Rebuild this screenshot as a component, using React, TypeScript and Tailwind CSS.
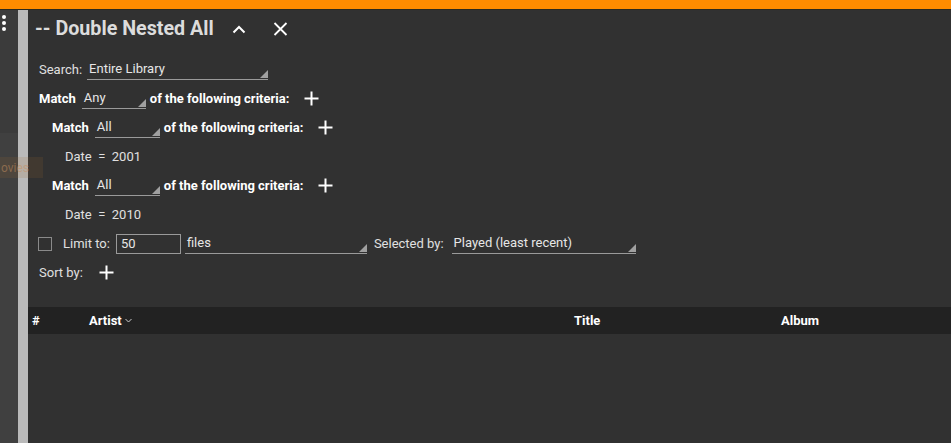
import React from 'react';

const Plus = ({ className = '' }: { className?: string }) => (
  <svg width="15" height="15" viewBox="0 0 15 15" className={className}>
    <path d="M7.5 0.5v14M0.5 7.5h14" stroke="#fff" strokeWidth="2" />
  </svg>
);

const Select = ({ value, width }: { value: string; width: string }) => (
  <div className={`relative h-[20px] flex items-center border-b border-[#9a9a9a] pl-[2px] text-[#e6e6e6] ${width}`}>
    <span>{value}</span>
    <svg width="8" height="8" viewBox="0 0 8 8" className="absolute right-0 bottom-[1px]">
      <path d="M8 0L8 8L0 8Z" fill="#a0a0a0" />
    </svg>
  </div>
);

const MatchRow = ({ value, indent, width }: { value: string; indent: string; width: string }) => (
  <div className={`h-[29px] flex items-center ${indent}`}>
    <span className="font-bold text-white mr-[6px]">Match</span>
    <Select value={value} width={width} />
    <span className="font-bold text-white ml-[4px] mr-[15px]">of the following criteria:</span>
    <Plus />
  </div>
);

const App = () => {
  return (
    <div
      className="w-[951px] h-[443px] overflow-hidden flex flex-col bg-[#313131] text-[13px] text-[#e0e0e0]"
      style={{ fontFamily: 'Roboto, "Liberation Sans", sans-serif' }}
    >
      {/* Top bar */}
      <div className="h-[10px] bg-[#ff8c00] border-b border-[#2b2a1f] shrink-0" />

      <div className="flex flex-1 min-h-0 relative">
        {/* Left strip */}
        <div className="w-[18px] flex flex-col bg-[#3b3b3b] shrink-0">
          <div className="h-[123px] flex flex-col items-start pl-[2px] pt-[5px] gap-[2px]">
            <div className="w-[4px] h-[4px] rounded-full bg-white" />
            <div className="w-[4px] h-[4px] rounded-full bg-white" />
            <div className="w-[4px] h-[4px] rounded-full bg-white" />
          </div>
          <div className="flex-1 bg-[#404040]" />
        </div>

        {/* Divider */}
        <div className="w-[10px] bg-[#bababa] shrink-0" />

        {/* faded button lying over the strip */}
        <div className="absolute left-0 top-[147px] z-20 h-[21px] w-[43px] bg-[#a06a30]/15 text-[#c89060]/50 text-[12px] flex items-center pl-[1px] whitespace-nowrap">
          ovies
        </div>

        {/* Main panel */}
        <div className="flex-1 flex flex-col bg-[#313131] min-w-0">
          <div className="h-[38px] flex items-center pl-[7px]">
            <span className="text-[19.7px] font-bold text-[#dcdcdc]">-- Double Nested All</span>
            <svg width="14" height="9" viewBox="0 0 14 9" className="ml-[18px] mt-[1px]">
              <path d="M1.5 7.5L7 2L12.5 7.5" stroke="#fff" strokeWidth="2" fill="none" />
            </svg>
            <svg width="15" height="14" viewBox="0 0 15 14" className="ml-[27px]">
              <path d="M1.5 1L13.5 13M13.5 1L1.5 13" stroke="#fff" strokeWidth="1.8" />
            </svg>
          </div>

          <div className="mt-[7px] flex flex-col pl-[11px]">
            <div className="h-[29px] flex items-center">
              <span className="mr-[5px]">Search:</span>
              <Select value="Entire Library" width="w-[181px]" />
            </div>

            <MatchRow value="Any" indent="" width="w-[64px]" />
            <MatchRow value="All" indent="pl-[13px]" width="w-[65px]" />
            <div className="h-[29px] flex items-center pl-[26px]">Date&nbsp; =&nbsp; 2001</div>
            <MatchRow value="All" indent="pl-[13px]" width="w-[65px]" />
            <div className="h-[29px] flex items-center pl-[26px]">Date&nbsp; =&nbsp; 2010</div>

            <div className="h-[29px] flex items-center">
              <div className="w-[14px] h-[14px] border-[1.5px] border-[#8a8a8a] -ml-[1px] mr-[11px]" />
              <span className="mr-[6px]">Limit to:</span>
              <div className="w-[65px] h-[20px] border border-[#9a9a9a] flex items-center pl-[4px] text-[#e6e6e6] mr-[4px]">50</div>
              <Select value="files" width="w-[182px]" />
              <span className="ml-[7px] mr-[8px]">Selected by:</span>
              <Select value="Played (least recent)" width="w-[184px]" />
            </div>

            <div className="h-[29px] flex items-center">
              <span className="mr-[16px]">Sort by:</span>
              <Plus />
            </div>
          </div>

          {/* Table header */}
          <div className="mt-[20px] h-[27px] bg-[#222222] flex items-center font-bold text-white">
            <div className="w-[61px] pl-[4px]">#</div>
            <div className="w-[485px] flex items-center gap-[3px]">
              Artist
              <svg width="7" height="5" viewBox="0 0 7 5">
                <path d="M0.5 1L3.5 4L6.5 1" stroke="#ccc" strokeWidth="1" fill="none" />
              </svg>
            </div>
            <div className="w-[207px]">Title</div>
            <div className="flex-1">Album</div>
          </div>
          <div className="flex-1 bg-[#313131]" />
        </div>
      </div>
    </div>
  );
};

export default App;
